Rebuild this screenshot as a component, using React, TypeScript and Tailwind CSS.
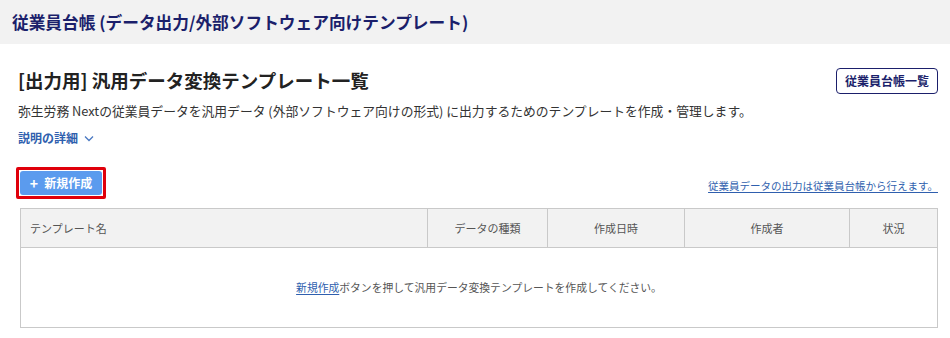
export default function App() {
  const cols = ["テンプレート名", "データの種類", "作成日時", "作成者", "状況"];

  return (
    <div
      className="h-[338px] w-[950px] bg-white text-[#333]"
      style={{ fontFamily: '"Noto Sans CJK JP", "Noto Sans", sans-serif' }}
    >
      <header className="flex h-[44px] items-center bg-[#f2f2f2] px-[12px]">
        <h1 className="text-[16.7px] font-bold leading-none text-[#1b1f6b]">
          従業員台帳 (データ出力/外部ソフトウェア向けテンプレート)
        </h1>
      </header>

      <main className="pl-[20px] pr-[12px]">
        <div className="flex items-start justify-between pt-[24px]">
          <div>
            <h2 className="ml-[-2px] text-[18.5px] font-bold leading-[24px] text-[#222]">
              [出力用] 汎用データ変換テンプレート一覧
            </h2>
            <p className="ml-[-2px] mt-[10px] text-[12.8px] leading-[18px] text-[#333]">
              弥生労務 Nextの従業員データを汎用データ (外部ソフトウェア向けの形式) に出力するためのテンプレートを作成・管理します。
            </p>
            <button className="ml-[-2px] mt-[10px] flex items-center gap-[6px] text-[12px] font-bold leading-[16px] text-[#2f5fae]">
              説明の詳細
              <svg width="10" height="7" viewBox="0 0 10 7" fill="none">
                <path d="M1 1.5 5 5.5 9 1.5" stroke="#4a78c2" strokeWidth="1.3" />
              </svg>
            </button>
          </div>
          <button className="h-[26px] w-[102px] rounded-[4px] border-[1.5px] border-[#1b1f6b] text-[12px] font-bold text-[#1b1f6b]">
            従業員台帳一覧
          </button>
        </div>

        <div className="mt-[21px] flex items-end justify-between">
          <div className="ml-[-4px] rounded-[2px] border-[3px] border-[#e0000b] p-[1px]">
            <button className="flex h-[24px] w-[82px] items-center justify-center gap-[6px] rounded-[3px] bg-[#5b9bee] text-[12px] font-bold text-white">
              <span className="text-[14px] leading-none">+</span>
              新規作成
            </button>
          </div>
          <a className="mb-[5px] text-[10.5px] text-[#2f5fae] underline underline-offset-2">
            従業員データの出力は従業員台帳から行えます。
          </a>
        </div>

        <div className="mt-[9px] border border-[#c9c9c9]">
          <div className="grid h-[39px] grid-cols-[407px_120px_137px_165px_1fr] border-b border-[#c9c9c9] bg-[#f2f2f2]">
            {cols.map((label, i) => (
              <div
                key={label}
                className={`flex items-center text-[11px] text-[#555] ${
                  i === 0 ? "justify-start pl-[9px]" : "justify-center"
                } ${i < cols.length - 1 ? "border-r border-[#c9c9c9]" : ""}`}
              >
                {label}
              </div>
            ))}
          </div>
          <div className="flex h-[79px] items-center justify-center text-[10.8px] text-[#555]">
            <a className="text-[#2f5fae] underline underline-offset-2">新規作成</a>
            ボタンを押して汎用データ変換テンプレートを作成してください。
          </div>
        </div>
      </main>
    </div>
  );
}
